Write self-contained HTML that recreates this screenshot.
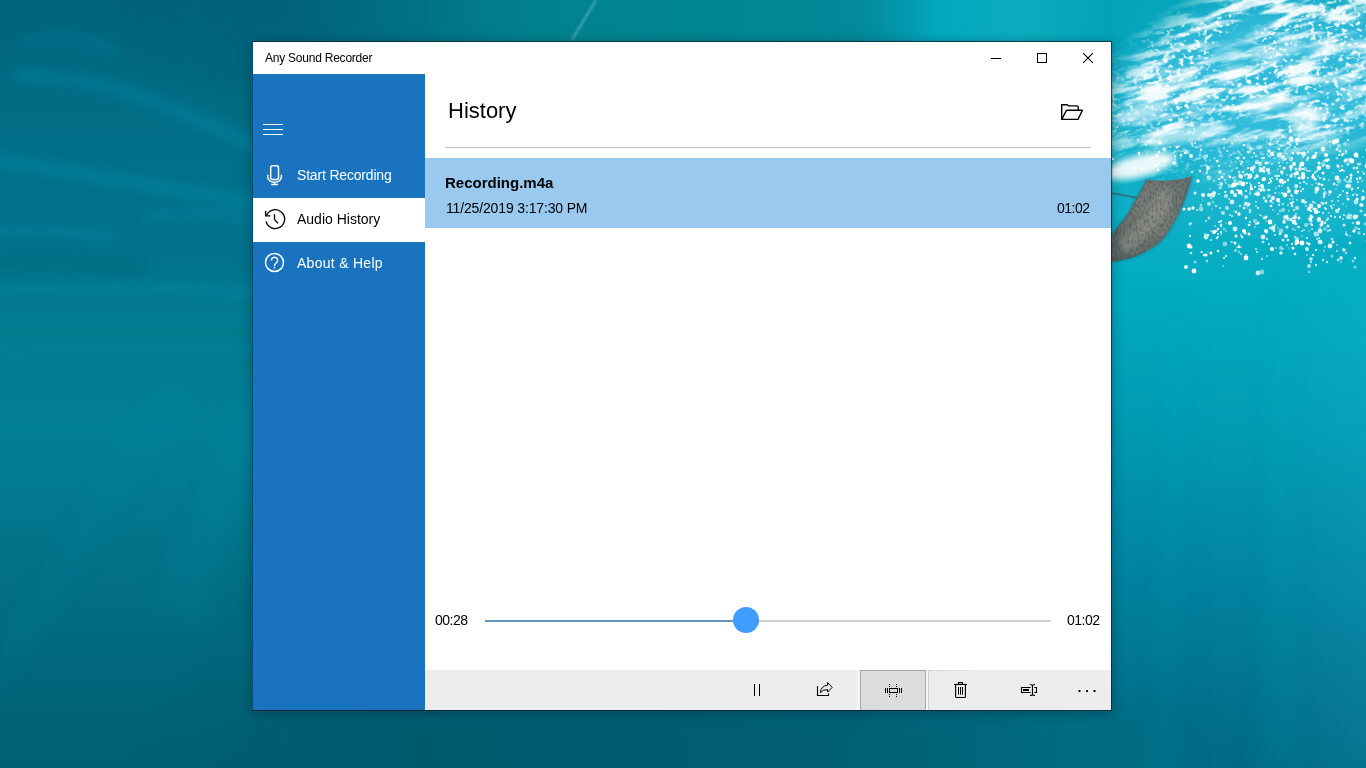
<!DOCTYPE html>
<html>
<head>
<meta charset="utf-8">
<title>Any Sound Recorder</title>
<style>
html,body{margin:0;padding:0;}
body{width:1366px;height:768px;overflow:hidden;position:relative;font-family:"Liberation Sans",sans-serif;background:#0a7088;}
.abs{position:absolute;}
#bg{position:absolute;left:0;top:0;width:1366px;height:768px;}
#win{position:absolute;left:253px;top:42px;width:858px;height:668px;background:#fff;box-shadow:0 0 0 1px rgba(0,22,28,.6), 0 0 0 2px rgba(70,90,95,.16), 0 2px 12px 1px rgba(0,0,0,.3);}
#title{position:absolute;left:12px;top:0;height:32px;line-height:32px;font-size:12px;letter-spacing:-.23px;color:#000;white-space:nowrap;}
#side{position:absolute;left:0;top:32px;width:172px;height:636px;background:#1973be;}
.nav{position:absolute;left:0;width:172px;height:44px;}
.nav span{position:absolute;left:44px;top:-1px;line-height:44px;font-size:14px;color:#fff;white-space:nowrap;}
.nav.sel{background:#fff;}
.nav.sel span{color:#000;}
#h1{position:absolute;left:195px;top:53px;font-size:22px;line-height:32px;color:#000;white-space:nowrap;}
#hr{position:absolute;left:192px;top:105px;width:646px;height:1px;background:#c2c2c2;}
#row{position:absolute;left:172px;top:116px;width:686px;height:70px;background:#99c9ef;}
#row .n{position:absolute;left:20px;top:15px;font-size:15px;font-weight:bold;line-height:20px;color:#000;white-space:nowrap;}
#row .d{position:absolute;left:21px;top:40px;letter-spacing:-.15px;font-size:14px;line-height:20px;color:#000;white-space:nowrap;}
#row .t{position:absolute;left:632px;top:40px;letter-spacing:-.5px;font-size:14px;line-height:20px;color:#000;white-space:nowrap;}
.tm{position:absolute;letter-spacing:-.5px;font-size:14px;line-height:20px;color:#000;white-space:nowrap;top:568px;}
#trk1{position:absolute;left:232px;top:578px;width:260px;height:2px;background:#6694ba;}
#trk2{position:absolute;left:492px;top:578px;width:306px;height:2px;background:#cfcfcf;}
#thumb{position:absolute;left:480px;top:565px;width:26px;height:26px;border-radius:13px;background:#409cff;}
#cmd{position:absolute;left:172px;top:628px;width:686px;height:40px;background:#ededed;}
#selbtn{position:absolute;left:607px;top:628px;width:66px;height:40px;background:#dcdcdc;box-sizing:border-box;border:1px solid #a6a6a6;border-bottom-color:#d4d4d4;}
svg{position:absolute;overflow:visible;}
</style>
</head>
<body>
<svg id="bg" width="1366" height="768" viewBox="0 0 1366 768">
<defs>
<linearGradient id="gL" x1="0" y1="0" x2="0" y2="768" gradientUnits="userSpaceOnUse"><stop offset="0.0000" stop-color="#00637b"/><stop offset="0.0260" stop-color="#00657d"/><stop offset="0.1562" stop-color="#016e86"/><stop offset="0.2930" stop-color="#01728a"/><stop offset="0.4232" stop-color="#027a8e"/><stop offset="0.5599" stop-color="#028096"/><stop offset="0.7487" stop-color="#027086"/><stop offset="0.9570" stop-color="#016276"/><stop offset="1.0000" stop-color="#015f72"/></linearGradient>
<linearGradient id="gR" x1="0" y1="0" x2="0" y2="768" gradientUnits="userSpaceOnUse"><stop offset="0.0000" stop-color="#06a6bc"/><stop offset="0.0781" stop-color="#0cacc4"/><stop offset="0.1953" stop-color="#12b2ca"/><stop offset="0.2865" stop-color="#0cb0c6"/><stop offset="0.3776" stop-color="#02acc0"/><stop offset="0.5404" stop-color="#029db6"/><stop offset="0.7227" stop-color="#0287a4"/><stop offset="0.9310" stop-color="#02708c"/><stop offset="1.0000" stop-color="#016a84"/></linearGradient>
<linearGradient id="gT" x1="0" y1="0" x2="1366" y2="0" gradientUnits="userSpaceOnUse"><stop offset="0.1464" stop-color="#016078" stop-opacity="0"/><stop offset="0.2196" stop-color="#01647c" stop-opacity="1"/><stop offset="0.3075" stop-color="#017286" stop-opacity="1"/><stop offset="0.3953" stop-color="#028290" stop-opacity="1"/><stop offset="0.5124" stop-color="#028592" stop-opacity="1"/><stop offset="0.6296" stop-color="#028a9a" stop-opacity="1"/><stop offset="0.6589" stop-color="#0298ac" stop-opacity="1"/><stop offset="0.6881" stop-color="#03a8c0" stop-opacity="1"/><stop offset="0.7467" stop-color="#0cacc0" stop-opacity="1"/><stop offset="0.8133" stop-color="#04a2b8" stop-opacity="1"/><stop offset="0.8712" stop-color="#06a6bc" stop-opacity="0"/></linearGradient>
<linearGradient id="gB" x1="0" y1="0" x2="1366" y2="0" gradientUnits="userSpaceOnUse"><stop offset="0.1098" stop-color="#016074" stop-opacity="0"/><stop offset="0.2196" stop-color="#015c70" stop-opacity="1"/><stop offset="0.3075" stop-color="#015a6c" stop-opacity="1"/><stop offset="0.6003" stop-color="#015e72" stop-opacity="1"/><stop offset="0.7760" stop-color="#016b80" stop-opacity="1"/><stop offset="0.8419" stop-color="#026e86" stop-opacity="1"/><stop offset="0.9151" stop-color="#026e88" stop-opacity="0"/></linearGradient>
<linearGradient id="gM" x1="0" y1="0" x2="1366" y2="0" gradientUnits="userSpaceOnUse">
<stop offset="0" stop-color="#000"/><stop offset=".45" stop-color="#000"/><stop offset=".78" stop-color="#fff"/><stop offset="1" stop-color="#fff"/>
</linearGradient>
<linearGradient id="gMB" x1="0" y1="660" x2="0" y2="768" gradientUnits="userSpaceOnUse"><stop offset="0" stop-color="#000"/><stop offset=".25" stop-color="#000"/><stop offset=".7" stop-color="#fff"/><stop offset="1" stop-color="#fff"/></linearGradient>
<mask id="mB"><rect x="0" y="660" width="1366" height="108" fill="url(#gMB)"/></mask>
<linearGradient id="gMT" x1="0" y1="0" x2="0" y2="100" gradientUnits="userSpaceOnUse"><stop offset="0" stop-color="#fff"/><stop offset=".45" stop-color="#fff"/><stop offset=".9" stop-color="#000"/><stop offset="1" stop-color="#000"/></linearGradient>
<mask id="mT"><rect x="0" y="0" width="1366" height="100" fill="url(#gMT)"/></mask>
<linearGradient id="gRH" x1="1111" y1="0" x2="1366" y2="0" gradientUnits="userSpaceOnUse"><stop offset="0" stop-color="#002840" stop-opacity=".01"/><stop offset=".5" stop-color="#002840" stop-opacity="0"/><stop offset=".55" stop-color="#40d8ff" stop-opacity="0"/><stop offset="1" stop-color="#40d8ff" stop-opacity=".1"/></linearGradient>
<linearGradient id="gMRH" x1="0" y1="240" x2="0" y2="340" gradientUnits="userSpaceOnUse"><stop offset="0" stop-color="#000"/><stop offset="1" stop-color="#fff"/></linearGradient>
<mask id="mRH"><rect x="1100" y="240" width="270" height="530" fill="url(#gMRH)"/></mask>
<mask id="mR"><rect width="1366" height="768" fill="url(#gM)"/></mask>
<radialGradient id="gFoamMask" cx="0" cy="0" r="1" gradientUnits="userSpaceOnUse" gradientTransform="translate(1300 62) rotate(-18) scale(235 105)">
<stop offset="0" stop-color="#fff"/><stop offset=".72" stop-color="#fff"/><stop offset="1" stop-color="#000"/>
</radialGradient>
<mask id="mFoam"><rect width="1366" height="768" fill="url(#gFoamMask)"/></mask>
<radialGradient id="gBubMask" cx="0" cy="0" r="1" gradientUnits="userSpaceOnUse" gradientTransform="translate(1290 175) scale(200 95)">
<stop offset="0" stop-color="#fff"/><stop offset=".6" stop-color="#ccc"/><stop offset="1" stop-color="#000"/>
</radialGradient>
<mask id="mBub"><rect width="1366" height="768" fill="url(#gBubMask)"/></mask>
<filter id="fFoam" x="0" y="0" width="100%" height="100%" color-interpolation-filters="sRGB">
<feTurbulence type="fractalNoise" baseFrequency="0.026 0.11" numOctaves="6" seed="7" result="t"/>
<feColorMatrix in="t" type="matrix" values="0 0 0 0 1  0 0 0 0 1  0 0 0 0 1  4.8 0 0 0 -2.08" result="a"/>
<feTurbulence type="fractalNoise" baseFrequency="0.011 0.022" numOctaves="2" seed="9" result="t2"/>
<feColorMatrix in="t2" type="matrix" values="0 0 0 0 1  0 0 0 0 1  0 0 0 0 1  5 0 0 0 -1.45" result="b"/>
<feComposite in="a" in2="b" operator="in"/>
<feGaussianBlur stdDeviation="0.7"/>
</filter>
<filter id="fFoam2" x="0" y="0" width="100%" height="100%" color-interpolation-filters="sRGB">
<feTurbulence type="fractalNoise" baseFrequency="0.2 0.26" numOctaves="2" seed="23" result="t"/>
<feColorMatrix in="t" type="matrix" values="0 0 0 0 1  0 0 0 0 1  0 0 0 0 1  12 0 0 0 -6.9" result="a"/>
<feTurbulence type="fractalNoise" baseFrequency="0.014 0.025" numOctaves="2" seed="31" result="t2"/>
<feColorMatrix in="t2" type="matrix" values="0 0 0 0 1  0 0 0 0 1  0 0 0 0 1  5 0 0 0 -1.8" result="b"/>
<feComposite in="a" in2="b" operator="in"/>
<feGaussianBlur stdDeviation="0.5"/>
</filter>
<filter id="fBub" x="0" y="0" width="100%" height="100%" color-interpolation-filters="sRGB">
<feTurbulence type="fractalNoise" baseFrequency="0.24" numOctaves="1" seed="11" result="t"/>
<feColorMatrix in="t" type="matrix" values="0 0 0 0 1  0 0 0 0 1  0 0 0 0 1  18 0 0 0 -10.6" result="a"/>
<feTurbulence type="fractalNoise" baseFrequency="0.02 0.035" numOctaves="2" seed="4" result="t2"/>
<feColorMatrix in="t2" type="matrix" values="0 0 0 0 1  0 0 0 0 1  0 0 0 0 1  5 0 0 0 -1.55" result="b"/>
<feComposite in="a" in2="b" operator="in"/>
<feGaussianBlur stdDeviation="0.6"/>
</filter>
<clipPath id="finc"><path d="M1192 176 Q1170 183 1147 179.5 L1128 214 L1108 240 L1108 262 Q1140 260 1162 240 Q1182 215 1192 176Z"/></clipPath>
<filter id="fGrain" x="0" y="0" width="100%" height="100%" color-interpolation-filters="sRGB"><feTurbulence type="fractalNoise" baseFrequency="0.5 0.25" numOctaves="2" seed="3"/><feColorMatrix type="matrix" values="0 0 0 0 .2  0 0 0 0 .22  0 0 0 0 .22  3 0 0 0 -1.2"/></filter>
<filter id="b05"><feGaussianBlur stdDeviation="0.45"/></filter>
<filter id="b1"><feGaussianBlur stdDeviation="1.2"/></filter>
<filter id="b3"><feGaussianBlur stdDeviation="3"/></filter>
<filter id="b5"><feGaussianBlur stdDeviation="5"/></filter>
<filter id="b8"><feGaussianBlur stdDeviation="8"/></filter>
<filter id="b20"><feGaussianBlur stdDeviation="20"/></filter>
<linearGradient id="gFin" x1="1120" y1="250" x2="1185" y2="180" gradientUnits="userSpaceOnUse">
<stop offset="0" stop-color="#5f6a6a"/><stop offset=".5" stop-color="#7a7f7a"/><stop offset="1" stop-color="#6b7674"/>
</linearGradient>
</defs>
<rect width="1366" height="768" fill="url(#gL)"/>
<rect width="1366" height="768" fill="url(#gR)" mask="url(#mR)"/>
<rect x="0" y="0" width="1366" height="100" fill="url(#gT)" mask="url(#mT)"/>
<rect x="0" y="660" width="1366" height="108" fill="url(#gB)" mask="url(#mB)"/>
<!-- ripples left -->
<g fill="none" stroke="#0a9cc0" stroke-linecap="round" filter="url(#b5)">
<path d="M20 76 Q90 76 150 100 T262 150" stroke-width="14" opacity="0.24"/>
<path d="M-5 160 Q100 176 260 204" stroke-width="16" opacity="0.24"/>
<path d="M-5 232 Q50 228 110 238" stroke-width="10" opacity="0.21"/>
<path d="M-5 290 Q120 284 260 294" stroke-width="12" opacity="0.22"/>
<path d="M-5 318 Q120 312 260 320" stroke-width="8" opacity="0.17"/>
<path d="M-5 352 Q120 348 260 350" stroke-width="10" opacity="0.15"/>
<path d="M150 216 Q210 208 262 224" stroke-width="10" opacity="0.22"/>
<path d="M30 42 Q70 32 110 50" stroke-width="18" opacity="0.11"/>
</g>
<g fill="none" stroke="#00566c" stroke-linecap="round" filter="url(#b8)">
<path d="M0 262 Q70 258 140 268" stroke-width="16" opacity="0.21"/>
<path d="M150 30 Q210 50 255 90" stroke-width="40" opacity="0.15"/>
</g>
<!-- light rays lower-left -->
<g filter="url(#b8)" opacity=".5">
<path d="M250 380 L150 600 L200 620 L262 450Z" fill="#0a8fa4" opacity=".3"/>
<path d="M262 560 L140 768 L262 768Z" fill="#00566a" opacity=".28"/>
<path d="M160 380 L0 640 L0 700 L200 390Z" fill="#0a8fa4" opacity=".18"/>
</g>
<!-- streak top -->
<path d="M596 0 L572 40" stroke="#7fd0dc" stroke-width="2.2" opacity=".5" filter="url(#b1)"/>
<rect x="1111" y="240" width="255" height="528" fill="url(#gRH)" mask="url(#mRH)"/>
<!-- vertical rays right -->
<g filter="url(#b8)">
<path d="M1270 300 L1255 768 L1300 768 L1290 300Z" fill="#18b4cc" opacity=".07"/>
<path d="M1170 300 L1150 768 L1175 768 L1185 300Z" fill="#18b4cc" opacity=".06"/>
</g>
<!-- foam -->
<g mask="url(#mFoam)">
<ellipse cx="1290" cy="85" rx="190" ry="85" fill="#3cc0e2" opacity=".75" filter="url(#b20)"/>
<g transform="rotate(-14 1366 0)"><rect x="900" y="-300" width="700" height="700" fill="#f4fcfe" filter="url(#fFoam)" opacity=".92"/><rect x="900" y="-300" width="700" height="700" fill="#fff" filter="url(#fFoam2)" opacity=".9"/></g>
</g>
<g fill="#fff" filter="url(#b3)" opacity=".6">
<ellipse cx="1181" cy="78" rx="15" ry="8" transform="rotate(-20 1181 78)"/>
<ellipse cx="1142" cy="112" rx="30" ry="8" transform="rotate(-18 1142 112)"/>
<ellipse cx="1185" cy="134" rx="45" ry="7" transform="rotate(-8 1185 134)"/>
<ellipse cx="1278" cy="52" rx="28" ry="5" transform="rotate(-14 1278 52)"/>
<ellipse cx="1335" cy="48" rx="28" ry="4" transform="rotate(-8 1335 48)"/>
<ellipse cx="1268" cy="102" rx="26" ry="7" transform="rotate(-6 1268 102)"/>
<ellipse cx="1305" cy="120" rx="14" ry="18"/>
<ellipse cx="1230" cy="75" rx="18" ry="6" transform="rotate(-25 1230 75)"/>
</g>
<!-- bubbles -->
<ellipse cx="1290" cy="185" rx="120" ry="45" fill="#3cc4e0" opacity=".35" filter="url(#b20)"/>
<g fill="#fff" filter="url(#b05)"><circle cx="1224" cy="148" r="1.2" opacity="0.5"/><circle cx="1326" cy="155" r="2.0" opacity="1"/><circle cx="1357" cy="217" r="1.0" opacity="0.5"/><circle cx="1256" cy="156" r="1.5" opacity="0.5"/><circle cx="1260" cy="215" r="0.8" opacity="1"/><circle cx="1260" cy="164" r="2.4" opacity="0.5"/><circle cx="1258" cy="223" r="1.5" opacity="0.9"/><circle cx="1313" cy="202" r="1.1" opacity="0.8"/><circle cx="1316" cy="250" r="1.1" opacity="1"/><circle cx="1241" cy="247" r="0.8" opacity="0.8"/><circle cx="1235" cy="229" r="2.4" opacity="0.8"/><circle cx="1337" cy="149" r="1.5" opacity="0.8"/><circle cx="1158" cy="170" r="1.3" opacity="1"/><circle cx="1250" cy="222" r="0.9" opacity="1"/><circle cx="1303" cy="201" r="2.0" opacity="1"/><circle cx="1214" cy="193" r="2.0" opacity="0.9"/><circle cx="1113" cy="159" r="1.1" opacity="1"/><circle cx="1368" cy="202" r="0.8" opacity="0.65"/><circle cx="1326" cy="160" r="1.5" opacity="0.8"/><circle cx="1292" cy="174" r="0.9" opacity="0.8"/><circle cx="1311" cy="211" r="1.1" opacity="1"/><circle cx="1303" cy="169" r="1.1" opacity="1"/><circle cx="1358" cy="188" r="1.0" opacity="0.9"/><circle cx="1281" cy="248" r="2.0" opacity="0.5"/><circle cx="1236" cy="162" r="1.1" opacity="0.5"/><circle cx="1157" cy="155" r="1.3" opacity="1"/><circle cx="1282" cy="186" r="0.9" opacity="0.5"/><circle cx="1337" cy="251" r="1.0" opacity="0.65"/><circle cx="1347" cy="186" r="1.7" opacity="1"/><circle cx="1250" cy="210" r="1.3" opacity="0.65"/><circle cx="1269" cy="244" r="0.9" opacity="0.9"/><circle cx="1272" cy="154" r="2.0" opacity="1"/><circle cx="1249" cy="204" r="1.5" opacity="0.5"/><circle cx="1348" cy="199" r="1.5" opacity="1"/><circle cx="1245" cy="233" r="1.5" opacity="0.9"/><circle cx="1243" cy="172" r="1.0" opacity="1"/><circle cx="1342" cy="166" r="1.2" opacity="0.5"/><circle cx="1214" cy="181" r="1.2" opacity="0.5"/><circle cx="1207" cy="173" r="1.3" opacity="0.65"/><circle cx="1221" cy="187" r="1.1" opacity="0.5"/><circle cx="1212" cy="209" r="0.8" opacity="0.5"/><circle cx="1313" cy="175" r="1.2" opacity="1"/><circle cx="1323" cy="173" r="1.5" opacity="1"/><circle cx="1240" cy="183" r="2.4" opacity="0.65"/><circle cx="1276" cy="248" r="1.0" opacity="0.5"/><circle cx="1181" cy="155" r="1.5" opacity="0.9"/><circle cx="1351" cy="175" r="1.5" opacity="1"/><circle cx="1174" cy="153" r="0.7" opacity="0.65"/><circle cx="1308" cy="178" r="0.9" opacity="0.8"/><circle cx="1276" cy="193" r="0.7" opacity="0.65"/><circle cx="1267" cy="233" r="0.9" opacity="0.65"/><circle cx="1190" cy="224" r="1.5" opacity="0.65"/><circle cx="1291" cy="170" r="0.9" opacity="1"/><circle cx="1288" cy="205" r="0.8" opacity="1"/><circle cx="1353" cy="261" r="1.5" opacity="0.5"/><circle cx="1305" cy="203" r="1.0" opacity="0.65"/><circle cx="1300" cy="166" r="1.3" opacity="0.9"/><circle cx="1280" cy="233" r="0.9" opacity="0.5"/><circle cx="1295" cy="177" r="0.8" opacity="1"/><circle cx="1362" cy="200" r="1.0" opacity="0.65"/><circle cx="1275" cy="176" r="1.1" opacity="0.65"/><circle cx="1217" cy="238" r="1.2" opacity="0.8"/><circle cx="1307" cy="255" r="0.7" opacity="1"/><circle cx="1322" cy="224" r="1.5" opacity="1"/><circle cx="1219" cy="222" r="1.0" opacity="0.9"/><circle cx="1234" cy="185" r="2.4" opacity="1"/><circle cx="1364" cy="174" r="1.0" opacity="0.9"/><circle cx="1256" cy="192" r="0.9" opacity="0.5"/><circle cx="1229" cy="157" r="0.8" opacity="0.65"/><circle cx="1201" cy="150" r="1.0" opacity="1"/><circle cx="1211" cy="240" r="1.0" opacity="0.8"/><circle cx="1306" cy="206" r="1.1" opacity="0.65"/><circle cx="1289" cy="211" r="1.0" opacity="0.5"/><circle cx="1337" cy="141" r="2.4" opacity="0.9"/><circle cx="1362" cy="205" r="1.5" opacity="0.9"/><circle cx="1363" cy="172" r="0.9" opacity="0.65"/><circle cx="1298" cy="227" r="1.3" opacity="0.5"/><circle cx="1191" cy="156" r="2.0" opacity="0.9"/><circle cx="1293" cy="153" r="1.5" opacity="1"/><circle cx="1279" cy="149" r="1.2" opacity="0.8"/><circle cx="1221" cy="232" r="1.0" opacity="1"/><circle cx="1343" cy="204" r="0.7" opacity="1"/><circle cx="1363" cy="157" r="0.7" opacity="0.65"/><circle cx="1210" cy="189" r="0.9" opacity="0.5"/><circle cx="1324" cy="197" r="1.3" opacity="0.65"/><circle cx="1207" cy="261" r="1.2" opacity="0.65"/><circle cx="1322" cy="243" r="0.7" opacity="0.9"/><circle cx="1269" cy="183" r="1.1" opacity="1"/><circle cx="1177" cy="147" r="1.5" opacity="1"/><circle cx="1367" cy="174" r="0.8" opacity="0.9"/><circle cx="1241" cy="235" r="1.0" opacity="0.65"/><circle cx="1259" cy="189" r="1.0" opacity="0.9"/><circle cx="1340" cy="217" r="1.2" opacity="0.8"/><circle cx="1368" cy="208" r="0.8" opacity="1"/><circle cx="1232" cy="143" r="1.0" opacity="0.9"/><circle cx="1348" cy="144" r="0.8" opacity="0.5"/><circle cx="1352" cy="189" r="1.3" opacity="1"/><circle cx="1280" cy="166" r="1.1" opacity="0.9"/><circle cx="1287" cy="163" r="1.0" opacity="0.5"/><circle cx="1317" cy="213" r="0.8" opacity="0.9"/><circle cx="1284" cy="159" r="2.0" opacity="0.65"/><circle cx="1285" cy="195" r="2.4" opacity="1"/><circle cx="1340" cy="195" r="1.1" opacity="1"/><circle cx="1324" cy="194" r="1.3" opacity="0.65"/><circle cx="1146" cy="145" r="1.2" opacity="0.5"/><circle cx="1191" cy="253" r="1.3" opacity="0.8"/><circle cx="1246" cy="191" r="1.0" opacity="1"/><circle cx="1323" cy="164" r="2.0" opacity="0.5"/><circle cx="1285" cy="182" r="1.3" opacity="1"/><circle cx="1192" cy="172" r="1.1" opacity="0.9"/><circle cx="1242" cy="162" r="1.3" opacity="0.9"/><circle cx="1231" cy="163" r="0.8" opacity="0.5"/><circle cx="1227" cy="208" r="2.0" opacity="0.65"/><circle cx="1244" cy="145" r="1.2" opacity="1"/><circle cx="1316" cy="265" r="1.1" opacity="1"/><circle cx="1307" cy="160" r="1.0" opacity="0.9"/><circle cx="1195" cy="143" r="0.9" opacity="1"/><circle cx="1249" cy="225" r="1.3" opacity="1"/><circle cx="1303" cy="189" r="1.1" opacity="1"/><circle cx="1189" cy="209" r="1.7" opacity="1"/><circle cx="1220" cy="188" r="1.3" opacity="0.65"/><circle cx="1270" cy="144" r="1.7" opacity="0.8"/><circle cx="1219" cy="179" r="1.1" opacity="1"/><circle cx="1326" cy="160" r="1.0" opacity="1"/><circle cx="1337" cy="245" r="1.0" opacity="0.5"/><circle cx="1266" cy="217" r="1.5" opacity="1"/><circle cx="1240" cy="161" r="0.7" opacity="1"/><circle cx="1119" cy="163" r="0.8" opacity="0.5"/><circle cx="1270" cy="228" r="1.2" opacity="0.65"/><circle cx="1220" cy="222" r="0.8" opacity="0.8"/><circle cx="1236" cy="212" r="1.2" opacity="1"/><circle cx="1279" cy="155" r="2.4" opacity="0.8"/><circle cx="1296" cy="174" r="1.2" opacity="1"/><circle cx="1316" cy="210" r="2.0" opacity="0.65"/><circle cx="1346" cy="253" r="0.9" opacity="1"/><circle cx="1348" cy="164" r="1.7" opacity="0.65"/><circle cx="1234" cy="211" r="0.7" opacity="0.9"/><circle cx="1316" cy="192" r="1.7" opacity="0.65"/><circle cx="1150" cy="142" r="0.9" opacity="0.8"/><circle cx="1364" cy="234" r="0.9" opacity="1"/><circle cx="1278" cy="144" r="0.7" opacity="0.5"/><circle cx="1333" cy="242" r="1.5" opacity="1"/><circle cx="1356" cy="153" r="0.8" opacity="0.5"/><circle cx="1187" cy="152" r="2.0" opacity="0.65"/><circle cx="1189" cy="184" r="1.1" opacity="0.8"/><circle cx="1235" cy="177" r="1.2" opacity="0.5"/><circle cx="1225" cy="244" r="2.4" opacity="0.5"/><circle cx="1251" cy="168" r="0.8" opacity="1"/><circle cx="1324" cy="161" r="1.0" opacity="0.8"/><circle cx="1309" cy="272" r="1.3" opacity="0.5"/><circle cx="1239" cy="247" r="1.3" opacity="1"/><circle cx="1202" cy="252" r="0.9" opacity="0.8"/><circle cx="1221" cy="226" r="1.0" opacity="0.8"/><circle cx="1223" cy="213" r="2.0" opacity="0.65"/><circle cx="1356" cy="155" r="2.4" opacity="1"/><circle cx="1279" cy="186" r="0.9" opacity="0.9"/><circle cx="1283" cy="240" r="1.3" opacity="1"/><circle cx="1312" cy="217" r="1.3" opacity="1"/><circle cx="1340" cy="171" r="1.0" opacity="1"/><circle cx="1325" cy="223" r="1.0" opacity="1"/><circle cx="1197" cy="210" r="1.1" opacity="0.65"/><circle cx="1152" cy="158" r="1.0" opacity="0.9"/><circle cx="1293" cy="218" r="1.0" opacity="1"/><circle cx="1278" cy="200" r="2.0" opacity="1"/><circle cx="1296" cy="224" r="1.2" opacity="0.9"/><circle cx="1230" cy="223" r="2.0" opacity="1"/><circle cx="1352" cy="163" r="0.7" opacity="0.9"/><circle cx="1327" cy="262" r="1.0" opacity="1"/><circle cx="1230" cy="166" r="0.7" opacity="1"/><circle cx="1317" cy="189" r="2.4" opacity="0.9"/><circle cx="1221" cy="234" r="1.0" opacity="0.5"/><circle cx="1248" cy="168" r="1.2" opacity="0.9"/><circle cx="1321" cy="225" r="1.5" opacity="1"/><circle cx="1233" cy="178" r="0.9" opacity="0.9"/><circle cx="1204" cy="255" r="1.2" opacity="1"/><circle cx="1314" cy="157" r="2.0" opacity="1"/><circle cx="1282" cy="172" r="0.9" opacity="0.65"/><circle cx="1277" cy="179" r="1.0" opacity="1"/><circle cx="1326" cy="203" r="1.3" opacity="0.9"/><circle cx="1346" cy="234" r="0.9" opacity="1"/><circle cx="1267" cy="239" r="1.1" opacity="0.9"/><circle cx="1292" cy="206" r="1.3" opacity="0.8"/><circle cx="1370" cy="249" r="1.3" opacity="0.9"/><circle cx="1308" cy="158" r="1.2" opacity="1"/><circle cx="1347" cy="177" r="1.0" opacity="1"/><circle cx="1337" cy="185" r="1.3" opacity="0.5"/><circle cx="1198" cy="181" r="1.7" opacity="1"/><circle cx="1255" cy="194" r="1.2" opacity="0.8"/><circle cx="1235" cy="243" r="1.5" opacity="1"/><circle cx="1270" cy="222" r="2.4" opacity="1"/><circle cx="1266" cy="231" r="2.0" opacity="1"/><circle cx="1231" cy="242" r="0.9" opacity="0.5"/><circle cx="1160" cy="143" r="1.7" opacity="1"/><circle cx="1221" cy="233" r="0.8" opacity="0.5"/><circle cx="1288" cy="219" r="2.0" opacity="0.65"/><circle cx="1235" cy="195" r="2.0" opacity="0.9"/><circle cx="1168" cy="159" r="0.7" opacity="0.5"/><circle cx="1302" cy="164" r="2.4" opacity="1"/><circle cx="1292" cy="158" r="1.0" opacity="1"/><circle cx="1256" cy="206" r="1.0" opacity="0.5"/><circle cx="1297" cy="140" r="2.0" opacity="1"/><circle cx="1323" cy="149" r="2.4" opacity="1"/><circle cx="1226" cy="231" r="0.8" opacity="0.8"/><circle cx="1319" cy="220" r="2.4" opacity="0.5"/><circle cx="1327" cy="220" r="1.2" opacity="0.65"/><circle cx="1343" cy="249" r="0.7" opacity="0.8"/><circle cx="1323" cy="260" r="0.9" opacity="1"/><circle cx="1250" cy="212" r="1.2" opacity="0.65"/><circle cx="1251" cy="187" r="1.2" opacity="1"/><circle cx="1247" cy="174" r="1.1" opacity="0.9"/><circle cx="1243" cy="166" r="0.8" opacity="0.65"/><circle cx="1320" cy="178" r="1.1" opacity="0.9"/><circle cx="1313" cy="255" r="1.3" opacity="0.8"/><circle cx="1336" cy="189" r="0.8" opacity="0.65"/><circle cx="1269" cy="151" r="1.7" opacity="0.9"/><circle cx="1264" cy="167" r="1.0" opacity="0.9"/><circle cx="1269" cy="156" r="1.1" opacity="0.65"/><circle cx="1369" cy="190" r="0.7" opacity="1"/><circle cx="1208" cy="235" r="0.8" opacity="1"/><circle cx="1355" cy="267" r="1.5" opacity="0.5"/><circle cx="1354" cy="231" r="1.7" opacity="0.9"/><circle cx="1308" cy="152" r="1.0" opacity="0.9"/><circle cx="1229" cy="185" r="1.3" opacity="0.5"/><circle cx="1274" cy="158" r="0.7" opacity="0.65"/><circle cx="1296" cy="214" r="0.9" opacity="0.8"/><circle cx="1220" cy="172" r="1.7" opacity="0.8"/><circle cx="1195" cy="262" r="1.5" opacity="0.5"/><circle cx="1257" cy="252" r="1.0" opacity="0.8"/><circle cx="1224" cy="174" r="1.0" opacity="0.5"/><circle cx="1213" cy="195" r="2.4" opacity="0.8"/><circle cx="1244" cy="208" r="1.5" opacity="0.8"/><circle cx="1164" cy="149" r="1.7" opacity="1"/><circle cx="1240" cy="176" r="1.7" opacity="1"/><circle cx="1218" cy="237" r="1.1" opacity="0.8"/><circle cx="1258" cy="273" r="2.4" opacity="0.8"/><circle cx="1303" cy="174" r="2.0" opacity="1"/><circle cx="1232" cy="171" r="1.1" opacity="0.5"/><circle cx="1297" cy="144" r="1.3" opacity="1"/><circle cx="1242" cy="176" r="1.2" opacity="0.65"/><circle cx="1252" cy="169" r="2.0" opacity="1"/><circle cx="1266" cy="221" r="0.7" opacity="0.8"/><circle cx="1200" cy="171" r="1.2" opacity="1"/><circle cx="1221" cy="225" r="1.5" opacity="0.65"/><circle cx="1287" cy="175" r="0.7" opacity="1"/><circle cx="1139" cy="155" r="1.0" opacity="0.5"/><circle cx="1245" cy="175" r="1.5" opacity="0.65"/><circle cx="1348" cy="217" r="2.4" opacity="0.5"/><circle cx="1303" cy="177" r="2.4" opacity="1"/><circle cx="1236" cy="250" r="1.1" opacity="0.65"/><circle cx="1358" cy="182" r="1.0" opacity="0.8"/><circle cx="1339" cy="168" r="0.7" opacity="0.65"/><circle cx="1255" cy="221" r="2.0" opacity="0.5"/><circle cx="1309" cy="209" r="2.0" opacity="1"/><circle cx="1353" cy="195" r="0.9" opacity="1"/><circle cx="1275" cy="225" r="1.2" opacity="0.5"/><circle cx="1269" cy="190" r="1.3" opacity="0.8"/><circle cx="1299" cy="178" r="1.5" opacity="1"/><circle cx="1331" cy="206" r="0.9" opacity="1"/><circle cx="1359" cy="166" r="0.7" opacity="0.5"/><circle cx="1289" cy="191" r="1.7" opacity="1"/><circle cx="1248" cy="152" r="1.2" opacity="1"/><circle cx="1361" cy="205" r="1.7" opacity="1"/><circle cx="1325" cy="208" r="1.0" opacity="1"/><circle cx="1323" cy="166" r="1.2" opacity="0.65"/><circle cx="1291" cy="139" r="2.4" opacity="1"/><circle cx="1138" cy="140" r="0.9" opacity="0.9"/><circle cx="1311" cy="216" r="1.5" opacity="1"/><circle cx="1369" cy="217" r="0.8" opacity="0.65"/><circle cx="1325" cy="222" r="0.7" opacity="1"/><circle cx="1297" cy="186" r="1.0" opacity="1"/><circle cx="1203" cy="200" r="0.7" opacity="0.65"/><circle cx="1226" cy="223" r="0.7" opacity="0.65"/><circle cx="1344" cy="250" r="1.7" opacity="0.8"/><circle cx="1237" cy="247" r="0.9" opacity="0.65"/><circle cx="1250" cy="191" r="0.8" opacity="0.5"/><circle cx="1213" cy="202" r="1.2" opacity="0.5"/><circle cx="1175" cy="156" r="1.5" opacity="0.65"/><circle cx="1256" cy="202" r="1.0" opacity="0.65"/><circle cx="1208" cy="168" r="2.0" opacity="1"/><circle cx="1295" cy="174" r="1.7" opacity="0.8"/><circle cx="1250" cy="193" r="0.9" opacity="0.5"/><circle cx="1302" cy="243" r="2.4" opacity="1"/><circle cx="1292" cy="244" r="1.0" opacity="1"/><circle cx="1320" cy="242" r="2.4" opacity="0.8"/><circle cx="1346" cy="151" r="1.0" opacity="1"/><circle cx="1302" cy="236" r="0.7" opacity="1"/><circle cx="1155" cy="165" r="1.2" opacity="1"/><circle cx="1297" cy="173" r="2.0" opacity="1"/><circle cx="1313" cy="177" r="1.7" opacity="1"/><circle cx="1357" cy="199" r="1.5" opacity="1"/><circle cx="1244" cy="231" r="2.0" opacity="1"/><circle cx="1257" cy="162" r="2.0" opacity="0.65"/><circle cx="1253" cy="172" r="1.1" opacity="0.8"/><circle cx="1219" cy="166" r="0.9" opacity="1"/><circle cx="1295" cy="230" r="1.0" opacity="0.5"/><circle cx="1323" cy="213" r="0.9" opacity="1"/><circle cx="1284" cy="220" r="1.2" opacity="0.65"/><circle cx="1206" cy="161" r="0.7" opacity="0.9"/><circle cx="1368" cy="241" r="2.4" opacity="0.8"/><circle cx="1365" cy="215" r="1.3" opacity="0.9"/><circle cx="1239" cy="245" r="1.1" opacity="0.5"/><circle cx="1281" cy="172" r="0.9" opacity="1"/><circle cx="1208" cy="252" r="0.7" opacity="0.5"/><circle cx="1240" cy="206" r="1.0" opacity="1"/><circle cx="1222" cy="177" r="1.5" opacity="1"/><circle cx="1221" cy="184" r="2.0" opacity="0.65"/><circle cx="1345" cy="161" r="1.3" opacity="1"/><circle cx="1287" cy="216" r="1.5" opacity="0.8"/><circle cx="1246" cy="197" r="2.0" opacity="0.65"/><circle cx="1270" cy="179" r="1.1" opacity="0.9"/><circle cx="1282" cy="157" r="1.5" opacity="1"/><circle cx="1209" cy="218" r="1.5" opacity="0.65"/><circle cx="1258" cy="192" r="0.9" opacity="0.65"/><circle cx="1254" cy="153" r="1.0" opacity="1"/><circle cx="1239" cy="214" r="1.7" opacity="1"/><circle cx="1297" cy="242" r="2.4" opacity="1"/><circle cx="1312" cy="157" r="0.7" opacity="0.9"/><circle cx="1174" cy="189" r="1.7" opacity="0.65"/><circle cx="1231" cy="155" r="0.8" opacity="1"/><circle cx="1367" cy="166" r="2.4" opacity="0.8"/><circle cx="1309" cy="231" r="0.8" opacity="0.65"/><circle cx="1328" cy="218" r="0.7" opacity="0.9"/><circle cx="1255" cy="178" r="1.2" opacity="0.65"/><circle cx="1264" cy="172" r="1.0" opacity="0.9"/><circle cx="1288" cy="192" r="0.9" opacity="1"/><circle cx="1330" cy="192" r="1.7" opacity="1"/><circle cx="1343" cy="219" r="0.9" opacity="0.8"/><circle cx="1300" cy="183" r="1.1" opacity="0.8"/><circle cx="1312" cy="225" r="1.1" opacity="0.8"/><circle cx="1317" cy="171" r="0.9" opacity="1"/><circle cx="1206" cy="255" r="1.5" opacity="1"/><circle cx="1207" cy="171" r="1.1" opacity="0.65"/><circle cx="1229" cy="199" r="1.0" opacity="0.65"/><circle cx="1264" cy="158" r="1.0" opacity="1"/><circle cx="1263" cy="180" r="1.3" opacity="0.8"/><circle cx="1308" cy="224" r="0.7" opacity="0.65"/><circle cx="1175" cy="146" r="0.7" opacity="0.5"/><circle cx="1298" cy="139" r="2.0" opacity="0.5"/><circle cx="1217" cy="231" r="0.7" opacity="0.9"/><circle cx="1355" cy="258" r="1.1" opacity="1"/><circle cx="1281" cy="181" r="2.4" opacity="1"/><circle cx="1328" cy="159" r="1.0" opacity="0.65"/><circle cx="1261" cy="170" r="2.4" opacity="0.9"/><circle cx="1309" cy="244" r="1.5" opacity="1"/><circle cx="1229" cy="176" r="1.0" opacity="0.65"/><circle cx="1275" cy="193" r="0.7" opacity="1"/><circle cx="1256" cy="163" r="1.1" opacity="1"/><circle cx="1350" cy="160" r="2.4" opacity="0.65"/><circle cx="1226" cy="256" r="1.1" opacity="0.9"/><circle cx="1279" cy="193" r="0.7" opacity="0.65"/><circle cx="1258" cy="194" r="2.0" opacity="1"/><circle cx="1334" cy="142" r="2.4" opacity="0.9"/><circle cx="1358" cy="157" r="0.8" opacity="0.8"/><circle cx="1332" cy="239" r="1.3" opacity="0.65"/><circle cx="1289" cy="248" r="0.7" opacity="0.65"/><circle cx="1347" cy="159" r="0.8" opacity="0.65"/><circle cx="1232" cy="192" r="2.0" opacity="1"/><circle cx="1339" cy="155" r="0.9" opacity="1"/><circle cx="1349" cy="186" r="1.0" opacity="1"/><circle cx="1230" cy="177" r="1.2" opacity="1"/><circle cx="1297" cy="193" r="1.2" opacity="0.9"/><circle cx="1363" cy="191" r="1.2" opacity="0.65"/><circle cx="1344" cy="225" r="1.5" opacity="0.8"/><circle cx="1325" cy="229" r="1.7" opacity="0.5"/><circle cx="1194" cy="271" r="2.4" opacity="1"/><circle cx="1332" cy="208" r="1.2" opacity="0.65"/><circle cx="1350" cy="243" r="1.3" opacity="1"/><circle cx="1207" cy="166" r="1.1" opacity="0.65"/><circle cx="1286" cy="159" r="0.9" opacity="1"/><circle cx="1347" cy="182" r="1.2" opacity="0.5"/><circle cx="1218" cy="234" r="1.1" opacity="0.8"/><circle cx="1283" cy="210" r="2.0" opacity="0.5"/><circle cx="1273" cy="210" r="1.0" opacity="0.5"/><circle cx="1256" cy="138" r="1.7" opacity="0.65"/><circle cx="1248" cy="206" r="0.9" opacity="0.9"/><circle cx="1350" cy="236" r="0.7" opacity="1"/><circle cx="1269" cy="173" r="1.7" opacity="0.65"/><circle cx="1296" cy="189" r="1.1" opacity="0.5"/><circle cx="1316" cy="153" r="1.3" opacity="1"/><circle cx="1329" cy="195" r="0.8" opacity="0.9"/><circle cx="1115" cy="170" r="1.5" opacity="0.5"/><circle cx="1351" cy="178" r="1.2" opacity="0.9"/><circle cx="1143" cy="168" r="0.7" opacity="0.5"/><circle cx="1241" cy="254" r="1.3" opacity="0.5"/><circle cx="1325" cy="165" r="0.7" opacity="1"/><circle cx="1291" cy="195" r="1.2" opacity="0.5"/><circle cx="1337" cy="158" r="1.5" opacity="0.5"/><circle cx="1288" cy="180" r="1.2" opacity="0.9"/><circle cx="1333" cy="173" r="0.7" opacity="0.65"/><circle cx="1251" cy="189" r="1.3" opacity="1"/><circle cx="1263" cy="188" r="1.0" opacity="0.9"/><circle cx="1349" cy="214" r="1.1" opacity="0.5"/><circle cx="1250" cy="194" r="1.1" opacity="0.5"/><circle cx="1339" cy="146" r="2.0" opacity="0.5"/><circle cx="1266" cy="163" r="1.5" opacity="1"/><circle cx="1319" cy="206" r="2.0" opacity="1"/><circle cx="1357" cy="195" r="1.0" opacity="1"/><circle cx="1346" cy="232" r="0.7" opacity="1"/><circle cx="1295" cy="237" r="1.0" opacity="0.8"/><circle cx="1254" cy="167" r="2.0" opacity="0.65"/><circle cx="1278" cy="169" r="0.8" opacity="0.65"/><circle cx="1287" cy="154" r="0.8" opacity="1"/><circle cx="1248" cy="178" r="1.3" opacity="0.5"/><circle cx="1263" cy="242" r="1.3" opacity="0.8"/><circle cx="1262" cy="179" r="0.8" opacity="0.5"/><circle cx="1315" cy="179" r="1.5" opacity="0.9"/><circle cx="1266" cy="201" r="1.5" opacity="1"/><circle cx="1262" cy="186" r="2.0" opacity="1"/><circle cx="1236" cy="158" r="1.0" opacity="0.5"/><circle cx="1175" cy="151" r="0.7" opacity="0.9"/><circle cx="1316" cy="234" r="2.4" opacity="0.65"/><circle cx="1284" cy="168" r="1.5" opacity="1"/><circle cx="1324" cy="251" r="1.1" opacity="0.5"/><circle cx="1322" cy="185" r="1.3" opacity="1"/><circle cx="1219" cy="194" r="1.0" opacity="0.65"/><circle cx="1302" cy="231" r="1.1" opacity="0.65"/><circle cx="1295" cy="147" r="1.3" opacity="0.5"/><circle cx="1306" cy="225" r="2.0" opacity="0.5"/><circle cx="1330" cy="246" r="2.4" opacity="0.8"/><circle cx="1311" cy="206" r="2.4" opacity="0.8"/><circle cx="1319" cy="219" r="2.0" opacity="1"/><circle cx="1315" cy="173" r="1.0" opacity="0.65"/><circle cx="1296" cy="192" r="2.0" opacity="1"/><circle cx="1312" cy="185" r="0.8" opacity="0.65"/><circle cx="1281" cy="253" r="1.7" opacity="0.9"/><circle cx="1221" cy="221" r="1.1" opacity="1"/><circle cx="1272" cy="178" r="1.0" opacity="0.65"/><circle cx="1293" cy="199" r="1.0" opacity="0.5"/><circle cx="1343" cy="191" r="0.9" opacity="0.8"/><circle cx="1284" cy="156" r="1.0" opacity="1"/><circle cx="1220" cy="208" r="1.0" opacity="0.8"/><circle cx="1346" cy="206" r="0.7" opacity="0.5"/><circle cx="1338" cy="260" r="1.2" opacity="0.9"/><circle cx="1193" cy="208" r="1.7" opacity="1"/><circle cx="1365" cy="224" r="1.5" opacity="0.5"/><circle cx="1320" cy="231" r="2.4" opacity="0.8"/><circle cx="1291" cy="176" r="1.7" opacity="0.9"/><circle cx="1325" cy="247" r="0.9" opacity="0.65"/><circle cx="1246" cy="258" r="2.4" opacity="1"/><circle cx="1360" cy="164" r="1.3" opacity="0.65"/><circle cx="1288" cy="188" r="1.3" opacity="0.8"/><circle cx="1242" cy="194" r="1.1" opacity="0.5"/><circle cx="1249" cy="178" r="1.0" opacity="0.9"/><circle cx="1259" cy="186" r="1.0" opacity="0.65"/><circle cx="1341" cy="258" r="1.7" opacity="1"/><circle cx="1352" cy="161" r="2.4" opacity="1"/><circle cx="1304" cy="154" r="2.4" opacity="0.8"/><circle cx="1216" cy="206" r="0.9" opacity="1"/><circle cx="1337" cy="211" r="2.0" opacity="0.8"/><circle cx="1285" cy="217" r="1.7" opacity="1"/><circle cx="1328" cy="159" r="1.0" opacity="1"/><circle cx="1311" cy="221" r="1.7" opacity="0.65"/><circle cx="1345" cy="180" r="1.7" opacity="0.5"/><circle cx="1205" cy="234" r="1.1" opacity="0.65"/><circle cx="1256" cy="249" r="1.3" opacity="0.5"/><circle cx="1361" cy="211" r="1.5" opacity="0.65"/><circle cx="1296" cy="169" r="1.5" opacity="0.8"/><circle cx="1299" cy="218" r="1.5" opacity="1"/><circle cx="1282" cy="172" r="1.7" opacity="0.65"/><circle cx="1272" cy="164" r="0.8" opacity="0.9"/><circle cx="1189" cy="246" r="2.4" opacity="1"/><circle cx="1271" cy="140" r="1.2" opacity="0.5"/><circle cx="1328" cy="226" r="1.5" opacity="0.8"/><circle cx="1256" cy="224" r="1.1" opacity="0.8"/><circle cx="1192" cy="144" r="1.1" opacity="0.9"/><circle cx="1139" cy="153" r="1.3" opacity="0.9"/><circle cx="1235" cy="251" r="0.8" opacity="1"/><circle cx="1258" cy="208" r="1.0" opacity="1"/><circle cx="1301" cy="191" r="1.2" opacity="0.65"/><circle cx="1334" cy="184" r="1.3" opacity="0.9"/><circle cx="1311" cy="262" r="1.0" opacity="0.8"/><circle cx="1286" cy="236" r="2.0" opacity="0.9"/><circle cx="1291" cy="203" r="1.3" opacity="1"/><circle cx="1305" cy="169" r="2.0" opacity="0.5"/><circle cx="1340" cy="151" r="1.5" opacity="0.65"/><circle cx="1271" cy="182" r="1.2" opacity="0.5"/><circle cx="1316" cy="212" r="2.0" opacity="1"/><circle cx="1271" cy="201" r="1.5" opacity="1"/><circle cx="1328" cy="167" r="2.4" opacity="0.65"/><circle cx="1366" cy="150" r="1.0" opacity="0.8"/><circle cx="1311" cy="139" r="0.8" opacity="1"/><circle cx="1291" cy="220" r="1.3" opacity="0.9"/><circle cx="1350" cy="217" r="2.4" opacity="0.5"/><circle cx="1224" cy="258" r="1.0" opacity="0.9"/><circle cx="1330" cy="142" r="0.9" opacity="0.9"/><circle cx="1306" cy="183" r="0.7" opacity="0.9"/><circle cx="1251" cy="185" r="1.1" opacity="0.8"/><circle cx="1201" cy="149" r="0.7" opacity="0.8"/><circle cx="1222" cy="184" r="0.8" opacity="0.9"/><circle cx="1136" cy="167" r="0.7" opacity="1"/><circle cx="1291" cy="167" r="2.0" opacity="1"/><circle cx="1303" cy="157" r="0.8" opacity="1"/><circle cx="1251" cy="148" r="1.5" opacity="0.5"/><circle cx="1299" cy="227" r="1.0" opacity="0.9"/><circle cx="1159" cy="152" r="1.2" opacity="1"/><circle cx="1290" cy="199" r="0.8" opacity="0.9"/><circle cx="1201" cy="252" r="1.0" opacity="0.5"/><circle cx="1346" cy="160" r="1.7" opacity="0.8"/><circle cx="1283" cy="163" r="0.8" opacity="0.5"/><circle cx="1170" cy="147" r="0.9" opacity="0.8"/><circle cx="1206" cy="237" r="2.4" opacity="0.8"/><circle cx="1309" cy="266" r="2.0" opacity="0.65"/><circle cx="1208" cy="177" r="1.3" opacity="0.5"/><circle cx="1347" cy="196" r="1.0" opacity="0.5"/><circle cx="1237" cy="168" r="1.2" opacity="0.5"/><circle cx="1247" cy="208" r="0.8" opacity="0.5"/><circle cx="1315" cy="156" r="2.0" opacity="0.8"/><circle cx="1312" cy="229" r="1.1" opacity="0.65"/><circle cx="1280" cy="234" r="1.3" opacity="1"/><circle cx="1134" cy="168" r="1.3" opacity="0.65"/><circle cx="1329" cy="180" r="1.0" opacity="0.5"/><circle cx="1216" cy="231" r="1.3" opacity="0.65"/><circle cx="1304" cy="230" r="1.0" opacity="0.65"/><circle cx="1327" cy="166" r="1.3" opacity="0.8"/><circle cx="1218" cy="185" r="0.7" opacity="1"/><circle cx="1230" cy="215" r="0.9" opacity="0.8"/><circle cx="1262" cy="259" r="1.0" opacity="0.9"/><circle cx="1355" cy="194" r="0.8" opacity="0.5"/><circle cx="1158" cy="157" r="1.2" opacity="0.8"/><circle cx="1320" cy="228" r="0.8" opacity="0.9"/><circle cx="1260" cy="163" r="1.0" opacity="1"/><circle cx="1273" cy="203" r="0.7" opacity="0.9"/><circle cx="1279" cy="163" r="1.0" opacity="0.9"/><circle cx="1208" cy="235" r="1.3" opacity="0.8"/><circle cx="1146" cy="168" r="1.0" opacity="0.5"/><circle cx="1355" cy="217" r="2.4" opacity="0.9"/><circle cx="1287" cy="245" r="0.8" opacity="1"/><circle cx="1299" cy="175" r="0.7" opacity="0.65"/><circle cx="1174" cy="141" r="0.8" opacity="0.65"/><circle cx="1179" cy="146" r="0.9" opacity="0.8"/><circle cx="1201" cy="205" r="1.5" opacity="0.5"/><circle cx="1325" cy="203" r="0.7" opacity="0.65"/><circle cx="1247" cy="183" r="1.0" opacity="1"/><circle cx="1297" cy="200" r="0.9" opacity="0.65"/><circle cx="1293" cy="248" r="1.5" opacity="1"/><circle cx="1188" cy="183" r="0.9" opacity="1"/><circle cx="1338" cy="201" r="0.8" opacity="1"/><circle cx="1235" cy="181" r="2.0" opacity="0.5"/><circle cx="1273" cy="198" r="2.0" opacity="1"/><circle cx="1296" cy="244" r="1.3" opacity="1"/><circle cx="1353" cy="223" r="1.3" opacity="0.5"/><circle cx="1277" cy="176" r="1.5" opacity="0.65"/><circle cx="1201" cy="209" r="2.4" opacity="0.5"/><circle cx="1297" cy="239" r="2.0" opacity="0.65"/><circle cx="1249" cy="234" r="1.5" opacity="1"/><circle cx="1327" cy="161" r="1.2" opacity="1"/><circle cx="1200" cy="155" r="1.5" opacity="0.5"/><circle cx="1298" cy="191" r="0.9" opacity="1"/><circle cx="1321" cy="242" r="1.0" opacity="1"/><circle cx="1271" cy="181" r="1.1" opacity="1"/><circle cx="1335" cy="217" r="1.0" opacity="1"/><circle cx="1357" cy="179" r="1.2" opacity="0.9"/><circle cx="1186" cy="267" r="2.0" opacity="0.9"/><circle cx="1307" cy="243" r="1.0" opacity="1"/><circle cx="1307" cy="249" r="2.0" opacity="0.8"/><circle cx="1211" cy="253" r="1.5" opacity="1"/><circle cx="1287" cy="227" r="1.5" opacity="0.9"/><circle cx="1356" cy="202" r="2.4" opacity="0.65"/><circle cx="1300" cy="187" r="0.8" opacity="0.8"/><circle cx="1341" cy="262" r="1.1" opacity="0.5"/><circle cx="1271" cy="206" r="1.3" opacity="1"/><circle cx="1246" cy="204" r="2.0" opacity="0.65"/><circle cx="1359" cy="233" r="1.7" opacity="0.5"/><circle cx="1232" cy="216" r="0.9" opacity="0.9"/><circle cx="1370" cy="163" r="1.5" opacity="1"/><circle cx="1319" cy="168" r="2.4" opacity="0.9"/><circle cx="1268" cy="190" r="0.9" opacity="0.65"/><circle cx="1268" cy="170" r="2.0" opacity="0.9"/><circle cx="1345" cy="161" r="1.5" opacity="0.8"/><circle cx="1298" cy="153" r="1.7" opacity="1"/><circle cx="1244" cy="205" r="0.8" opacity="0.5"/><circle cx="1344" cy="215" r="1.1" opacity="0.9"/><circle cx="1225" cy="180" r="1.3" opacity="0.5"/><circle cx="1311" cy="219" r="1.0" opacity="0.9"/><circle cx="1246" cy="203" r="1.5" opacity="0.65"/><circle cx="1279" cy="202" r="1.5" opacity="0.5"/><circle cx="1358" cy="223" r="2.0" opacity="1"/><circle cx="1274" cy="231" r="1.1" opacity="1"/><circle cx="1260" cy="168" r="0.9" opacity="1"/><circle cx="1255" cy="227" r="0.9" opacity="0.5"/><circle cx="1184" cy="209" r="1.5" opacity="1"/><circle cx="1316" cy="183" r="0.8" opacity="0.8"/><circle cx="1346" cy="153" r="1.5" opacity="0.5"/><circle cx="1312" cy="158" r="0.7" opacity="1"/><circle cx="1275" cy="235" r="0.9" opacity="0.8"/><circle cx="1123" cy="146" r="0.7" opacity="0.8"/><circle cx="1295" cy="224" r="0.9" opacity="0.5"/><circle cx="1225" cy="192" r="1.0" opacity="0.9"/><circle cx="1158" cy="163" r="1.1" opacity="1"/><circle cx="1288" cy="143" r="1.7" opacity="0.5"/><circle cx="1315" cy="209" r="1.1" opacity="0.9"/><circle cx="1294" cy="164" r="2.0" opacity="0.9"/><circle cx="1284" cy="222" r="1.7" opacity="1"/><circle cx="1319" cy="184" r="1.5" opacity="0.9"/><circle cx="1239" cy="252" r="1.2" opacity="0.5"/><circle cx="1223" cy="266" r="0.9" opacity="0.5"/><circle cx="1279" cy="176" r="1.1" opacity="0.9"/><circle cx="1332" cy="256" r="1.5" opacity="0.5"/><circle cx="1227" cy="142" r="0.7" opacity="0.65"/><circle cx="1232" cy="202" r="2.4" opacity="0.8"/><circle cx="1315" cy="172" r="1.0" opacity="0.65"/><circle cx="1311" cy="224" r="1.3" opacity="0.65"/><circle cx="1288" cy="240" r="1.3" opacity="0.9"/><circle cx="1217" cy="161" r="1.3" opacity="0.9"/><circle cx="1240" cy="175" r="1.5" opacity="0.9"/><circle cx="1309" cy="219" r="0.8" opacity="0.8"/><circle cx="1241" cy="177" r="1.7" opacity="1"/><circle cx="1292" cy="204" r="1.0" opacity="1"/><circle cx="1359" cy="229" r="1.0" opacity="1"/><circle cx="1295" cy="218" r="1.0" opacity="1"/><circle cx="1307" cy="171" r="1.0" opacity="0.5"/><circle cx="1362" cy="181" r="0.7" opacity="1"/><circle cx="1325" cy="140" r="0.9" opacity="0.65"/><circle cx="1339" cy="209" r="1.2" opacity="0.9"/><circle cx="1292" cy="196" r="1.0" opacity="1"/><circle cx="1273" cy="228" r="2.4" opacity="0.8"/><circle cx="1255" cy="187" r="1.0" opacity="1"/><circle cx="1149" cy="160" r="1.7" opacity="0.5"/><circle cx="1257" cy="195" r="0.7" opacity="1"/><circle cx="1308" cy="171" r="1.0" opacity="0.5"/><circle cx="1328" cy="219" r="1.3" opacity="0.5"/><circle cx="1268" cy="163" r="0.8" opacity="0.8"/><circle cx="1307" cy="184" r="1.0" opacity="0.5"/><circle cx="1347" cy="235" r="0.9" opacity="1"/><circle cx="1280" cy="159" r="0.7" opacity="0.8"/><circle cx="1243" cy="184" r="2.4" opacity="1"/><circle cx="1297" cy="208" r="2.0" opacity="0.65"/><circle cx="1224" cy="229" r="1.3" opacity="0.5"/><circle cx="1293" cy="229" r="1.2" opacity="0.5"/><circle cx="1251" cy="177" r="1.0" opacity="0.8"/><circle cx="1283" cy="183" r="1.2" opacity="1"/><circle cx="1330" cy="147" r="0.7" opacity="1"/><circle cx="1211" cy="231" r="0.8" opacity="1"/><circle cx="1351" cy="215" r="0.8" opacity="1"/><circle cx="1322" cy="203" r="1.3" opacity="0.9"/><circle cx="1262" cy="272" r="2.4" opacity="0.5"/><circle cx="1263" cy="237" r="2.4" opacity="0.8"/><circle cx="1218" cy="251" r="1.3" opacity="0.9"/><circle cx="1282" cy="174" r="1.2" opacity="0.5"/><circle cx="1286" cy="138" r="1.1" opacity="0.5"/><circle cx="1357" cy="216" r="1.5" opacity="0.65"/><circle cx="1237" cy="184" r="1.5" opacity="1"/><circle cx="1264" cy="168" r="1.5" opacity="0.65"/><circle cx="1242" cy="195" r="0.9" opacity="0.5"/><circle cx="1250" cy="176" r="2.4" opacity="0.9"/><circle cx="1314" cy="209" r="1.5" opacity="1"/><circle cx="1209" cy="178" r="2.4" opacity="0.5"/><circle cx="1323" cy="204" r="1.0" opacity="1"/><circle cx="1229" cy="187" r="1.1" opacity="0.5"/><circle cx="1307" cy="238" r="1.0" opacity="0.9"/><circle cx="1281" cy="231" r="2.4" opacity="0.5"/><circle cx="1317" cy="239" r="1.1" opacity="0.65"/><circle cx="1226" cy="196" r="2.0" opacity="0.65"/><circle cx="1296" cy="186" r="2.0" opacity="0.65"/><circle cx="1226" cy="192" r="1.0" opacity="0.5"/><circle cx="1302" cy="154" r="0.9" opacity="1"/><circle cx="1262" cy="216" r="0.8" opacity="0.65"/><circle cx="1295" cy="254" r="1.3" opacity="1"/><circle cx="1311" cy="259" r="1.7" opacity="0.8"/><circle cx="1246" cy="255" r="1.3" opacity="0.5"/><circle cx="1348" cy="140" r="1.1" opacity="0.9"/><circle cx="1264" cy="190" r="1.5" opacity="0.8"/><circle cx="1329" cy="213" r="0.8" opacity="0.8"/><circle cx="1339" cy="181" r="2.4" opacity="0.5"/><circle cx="1349" cy="186" r="2.4" opacity="0.65"/><circle cx="1257" cy="176" r="1.7" opacity="1"/><circle cx="1250" cy="183" r="0.8" opacity="0.8"/><circle cx="1195" cy="193" r="1.5" opacity="0.9"/><circle cx="1319" cy="212" r="0.9" opacity="1"/><circle cx="1337" cy="178" r="2.4" opacity="0.9"/><circle cx="1301" cy="153" r="1.0" opacity="1"/><circle cx="1304" cy="182" r="1.1" opacity="0.9"/><circle cx="1281" cy="153" r="0.7" opacity="1"/><circle cx="1326" cy="209" r="1.0" opacity="0.9"/><circle cx="1174" cy="163" r="2.0" opacity="0.8"/><circle cx="1268" cy="156" r="0.8" opacity="0.5"/><circle cx="1273" cy="155" r="1.0" opacity="1"/><circle cx="1318" cy="176" r="0.7" opacity="1"/><circle cx="1283" cy="204" r="0.9" opacity="0.9"/><circle cx="1293" cy="202" r="1.3" opacity="0.65"/><circle cx="1354" cy="168" r="1.5" opacity="0.65"/><circle cx="1232" cy="186" r="1.7" opacity="1"/><circle cx="1318" cy="235" r="0.9" opacity="0.8"/><circle cx="1356" cy="228" r="1.7" opacity="0.5"/><circle cx="1191" cy="247" r="1.5" opacity="1"/><circle cx="1363" cy="198" r="2.0" opacity="1"/><circle cx="1358" cy="164" r="1.2" opacity="0.65"/><circle cx="1244" cy="158" r="1.2" opacity="0.9"/><circle cx="1329" cy="160" r="1.0" opacity="0.9"/><circle cx="1279" cy="205" r="1.0" opacity="0.9"/><circle cx="1251" cy="168" r="1.0" opacity="1"/><circle cx="1300" cy="169" r="2.0" opacity="0.8"/><circle cx="1209" cy="204" r="2.0" opacity="0.65"/><circle cx="1291" cy="159" r="2.4" opacity="0.5"/><circle cx="1164" cy="166" r="0.8" opacity="0.8"/><circle cx="1239" cy="172" r="1.3" opacity="0.65"/><circle cx="1142" cy="169" r="1.1" opacity="1"/><circle cx="1369" cy="167" r="1.2" opacity="0.9"/><circle cx="1280" cy="211" r="1.2" opacity="0.5"/><circle cx="1287" cy="218" r="1.3" opacity="0.8"/><circle cx="1218" cy="229" r="1.3" opacity="1"/><circle cx="1224" cy="139" r="1.3" opacity="1"/><circle cx="1338" cy="197" r="1.0" opacity="0.65"/><circle cx="1278" cy="228" r="0.7" opacity="0.9"/><circle cx="1226" cy="183" r="1.1" opacity="0.5"/><circle cx="1316" cy="180" r="0.9" opacity="0.5"/><circle cx="1294" cy="222" r="2.4" opacity="0.9"/><circle cx="1343" cy="154" r="1.3" opacity="0.9"/><circle cx="1211" cy="198" r="1.0" opacity="0.8"/><circle cx="1236" cy="236" r="1.5" opacity="1"/><circle cx="1185" cy="153" r="1.3" opacity="0.8"/><circle cx="1338" cy="166" r="1.7" opacity="0.8"/><circle cx="1206" cy="221" r="0.9" opacity="0.8"/><circle cx="1344" cy="171" r="1.2" opacity="0.5"/><circle cx="1190" cy="236" r="1.2" opacity="0.8"/><circle cx="1152" cy="168" r="0.8" opacity="1"/><circle cx="1324" cy="195" r="1.0" opacity="0.8"/><circle cx="1267" cy="256" r="0.8" opacity="1"/><circle cx="1291" cy="219" r="1.0" opacity="1"/><circle cx="1241" cy="164" r="1.0" opacity="0.9"/><circle cx="1264" cy="179" r="2.0" opacity="1"/><circle cx="1242" cy="237" r="1.2" opacity="1"/><circle cx="1322" cy="222" r="1.5" opacity="1"/><circle cx="1319" cy="163" r="1.5" opacity="1"/><circle cx="1214" cy="232" r="2.0" opacity="1"/><circle cx="1282" cy="193" r="1.2" opacity="0.65"/><circle cx="1315" cy="203" r="1.1" opacity="0.65"/><circle cx="1330" cy="230" r="0.9" opacity="1"/><circle cx="1249" cy="204" r="1.5" opacity="0.65"/><circle cx="1357" cy="168" r="1.3" opacity="1"/><circle cx="1243" cy="172" r="0.7" opacity="0.8"/><circle cx="1310" cy="219" r="1.7" opacity="1"/><circle cx="1238" cy="158" r="1.5" opacity="0.9"/><circle cx="1295" cy="217" r="2.0" opacity="0.8"/><circle cx="1259" cy="183" r="1.1" opacity="1"/><circle cx="1232" cy="242" r="0.8" opacity="1"/><circle cx="1272" cy="249" r="2.0" opacity="1"/><circle cx="1342" cy="155" r="1.3" opacity="1"/><circle cx="1264" cy="171" r="1.3" opacity="0.9"/><circle cx="1215" cy="226" r="1.1" opacity="0.5"/><circle cx="1199" cy="140" r="0.7" opacity="0.9"/><circle cx="1334" cy="205" r="1.1" opacity="0.5"/><circle cx="1264" cy="218" r="1.2" opacity="1"/><circle cx="1252" cy="189" r="1.2" opacity="1"/><circle cx="1267" cy="154" r="1.0" opacity="0.5"/><circle cx="1269" cy="196" r="2.0" opacity="0.5"/><circle cx="1261" cy="190" r="1.7" opacity="1"/><circle cx="1325" cy="193" r="2.0" opacity="0.5"/><circle cx="1262" cy="158" r="1.0" opacity="1"/><circle cx="1345" cy="144" r="2.0" opacity="0.5"/><circle cx="1310" cy="171" r="0.9" opacity="0.8"/><circle cx="1294" cy="210" r="1.1" opacity="1"/><circle cx="1358" cy="172" r="1.2" opacity="0.8"/><circle cx="1360" cy="178" r="1.5" opacity="0.8"/><circle cx="1318" cy="145" r="0.7" opacity="0.9"/><circle cx="1328" cy="231" r="1.1" opacity="0.8"/><circle cx="1332" cy="201" r="1.3" opacity="0.5"/><circle cx="1312" cy="225" r="1.1" opacity="0.65"/><circle cx="1350" cy="181" r="2.0" opacity="0.65"/><circle cx="1331" cy="216" r="1.0" opacity="1"/><circle cx="1252" cy="157" r="0.9" opacity="0.65"/><circle cx="1227" cy="151" r="0.9" opacity="0.65"/><circle cx="1347" cy="193" r="1.3" opacity="1"/><circle cx="1264" cy="198" r="1.3" opacity="1"/><circle cx="1191" cy="223" r="0.8" opacity="0.9"/><circle cx="1240" cy="192" r="2.4" opacity="1"/><circle cx="1237" cy="190" r="1.1" opacity="0.9"/><circle cx="1278" cy="214" r="0.8" opacity="0.9"/><circle cx="1283" cy="180" r="1.0" opacity="0.8"/><circle cx="1324" cy="189" r="1.0" opacity="0.9"/><circle cx="1306" cy="202" r="1.0" opacity="1"/><circle cx="1319" cy="238" r="1.0" opacity="0.8"/><circle cx="1209" cy="195" r="2.0" opacity="0.9"/><circle cx="1276" cy="188" r="0.8" opacity="0.8"/><circle cx="1246" cy="218" r="1.2" opacity="1"/><circle cx="1203" cy="195" r="2.0" opacity="1"/><circle cx="1283" cy="249" r="1.0" opacity="0.5"/><circle cx="1342" cy="170" r="1.3" opacity="1"/><circle cx="1157" cy="166" r="0.9" opacity="1"/><circle cx="1324" cy="179" r="1.5" opacity="0.8"/></g>
<!-- white splash near window edge -->
<ellipse cx="1140" cy="166" rx="36" ry="11" fill="#fff" opacity=".9" filter="url(#b3)" transform="rotate(-14 1140 166)"/>
<!-- fin -->
<g>
<path d="M1111 193 L1138 198" stroke="#3a5a60" stroke-width="1.4" opacity=".8"/>
<path id="finp" d="M1192 176 Q1170 183 1147 179.5 L1128 214 L1108 240 L1108 262 Q1140 260 1162 240 Q1182 215 1192 176Z" fill="url(#gFin)"/>
<path d="M1168 190 Q1156 222 1122 248" fill="none" stroke="#9c9d93" stroke-width="16" opacity=".55" filter="url(#b3)" clip-path="url(#finc)"/>
<path d="M1147 179.5 L1128 214 L1108 240 L1108 262 Q1140 260 1162 240 Q1182 215 1192 176" fill="none" stroke="#3c5a60" stroke-width="2" opacity=".55" filter="url(#b1)"/>
<rect x="1105" y="170" width="92" height="96" filter="url(#fGrain)" clip-path="url(#finc)" opacity=".35"/>
</g>
</svg>
<div id="win">
  <div class="abs" style="left:-1px;top:0;width:1px;height:668px;background:#024e70"></div>
  <div id="title">Any Sound Recorder</div>
  <div id="side">
    <div class="nav" style="top:80px"><span style="letter-spacing:-.18px">Start Recording</span></div>
    <div class="nav sel" style="top:124px"><span>Audio History</span></div>
    <div class="nav" style="top:168px"><span style="letter-spacing:.28px">About &amp; Help</span></div>
  </div>
  <div id="h1">History</div>
  <div id="hr"></div>
  <div id="row"><div class="n">Recording.m4a</div><div class="d">11/25/2019 3:17:30 PM</div><div class="t">01:02</div></div>
  <div class="tm" style="left:182px">00:28</div>
  <div class="tm" style="left:814px">01:02</div>
  <div id="trk1"></div><div id="trk2"></div><div id="thumb"></div>
  <div id="cmd"></div>
  <div class="abs" style="left:604px;top:628px;width:3px;height:40px;background:#f4f4f4"></div>
  <div class="abs" style="left:673px;top:628px;width:2px;height:40px;background:#f4f4f4"></div>
  <div class="abs" style="left:675px;top:628px;width:1px;height:40px;background:#cfcfcf"></div>
  <div class="abs" style="left:675px;top:628px;width:66px;height:1px;background:linear-gradient(90deg,#cfcfcf,#e4e4e4 60%,#ededed)"></div>
  <div id="selbtn"></div>
</div>
<svg id="ic" width="1366" height="768" viewBox="0 0 1366 768" style="left:0;top:0" fill="none" stroke-linecap="butt">
<!-- hamburger -->
<g fill="#fff"><rect x="263" y="124" width="20" height="1"/><rect x="263" y="129" width="20" height="1"/><rect x="263" y="134" width="20" height="1"/></g>
<!-- mic -->
<g stroke="#fff" stroke-width="1.5">
<rect x="270.7" y="165.8" width="7.8" height="13.6" rx="2" ry="2"/>
<path d="M267.7 174.8v2.3a6.85 5.2 0 0 0 13.7 0v-2.3"/>
<path d="M274.55 182.4V184.4M271.2 184.5H278" stroke-width="1.3"/>
</g>
<!-- history -->
<g stroke="#000" stroke-width="1.35">
<path d="M266.7 215.2A9.4 9.4 0 1 1 266.1 221.3"/>
<path d="M265.6 210.8V215.9H270.4"/>
<path d="M274.5 214.2V219.6L278 223.2"/>
</g>
<!-- help -->
<g stroke="#fff" stroke-width="1.45">
<circle cx="274.5" cy="262.5" r="9"/>
<path d="M271.4 260.4a3.1 3.1 0 1 1 4.8 2.6c-1.2.8-1.7 1.5-1.7 2.7v.4"/>
</g>
<circle cx="274.5" cy="267.7" r=".85" fill="#fff"/>
<!-- window buttons -->
<rect x="991" y="58" width="10" height="1" fill="#000"/>
<rect x="1037.5" y="53.5" width="9" height="9" stroke="#000" stroke-width="1"/>
<path d="M1083.2 53.2L1092.8 62.8M1092.8 53.2L1083.2 62.8" stroke="#000" stroke-width="1.1"/>
<!-- folder -->
<g stroke="#000" stroke-width="1.4" stroke-linejoin="round">
<path d="M1061.7 119V104.7H1067L1068.7 105.9H1077Q1078.2 105.9 1078.2 107.1V110"/>
<path d="M1066.6 110.2H1082.4L1078 119.4H1061.7Z"/>
</g>
<!-- pause -->
<rect x="754" y="684" width="1" height="12" fill="#000"/><rect x="759" y="684" width="1" height="12" fill="#000"/>
<!-- share -->
<path d="M817.5 686.2V695.5H828.5V693.4" stroke="#000" stroke-width="1.1"/>
<path d="M827.5 682.5L832.2 687.3L827.5 692.1V689.6Q822.6 689.4 820.4 692.7Q820.8 686 827.5 685.2Z" stroke="#000" stroke-width="1" stroke-linejoin="round"/>
<!-- trim -->
<g fill="#000">
<rect x="885" y="688" width="1" height="5"/><rect x="887" y="688" width="1" height="5"/><rect x="899" y="688" width="1" height="5"/><rect x="901" y="688" width="1" height="5"/>
<rect x="889" y="684" width="1" height="1"/><rect x="889" y="686" width="1" height="1"/><rect x="889" y="694" width="1" height="1"/><rect x="889" y="696" width="1" height="1"/>
<rect x="896" y="684" width="1" height="1"/><rect x="896" y="686" width="1" height="1"/><rect x="896" y="694" width="1" height="1"/><rect x="896" y="696" width="1" height="1"/>
</g>
<rect x="889.5" y="688.5" width="8" height="4" stroke="#000" stroke-width="1"/>
<!-- trash -->
<g stroke="#000" stroke-width="1.1">
<path d="M954 684.5H967"/>
<path d="M958.5 684.5V682.6H962.5V684.5"/>
<path d="M955.6 684.5V696.4Q955.6 697.5 956.7 697.5H964.3Q965.4 697.5 965.4 696.4V684.5"/>
<path d="M958.5 687V694.7M960.5 687V694.7M962.5 687V694.7" stroke-width="1"/>
</g>
<!-- rename -->
<g stroke="#000" stroke-width="1.1">
<path d="M1030.6 687.5H1021.5V692.5H1030.6"/>
<path d="M1034.3 687.5H1036.5V692.5H1034.3"/>
<path d="M1030 684.5Q1032.4 684.5 1032.5 686V694Q1032.4 695.5 1030 695.5M1035 684.5Q1032.6 684.5 1032.5 686M1035 695.5Q1032.6 695.5 1032.5 694" stroke-width="1.15"/>
</g>
<rect x="1023" y="689" width="6" height="2" fill="#000"/>
<!-- more -->
<g fill="#000"><rect x="1078.5" y="690" width="2" height="2" rx=".5"/><rect x="1086" y="690" width="2" height="2" rx=".5"/><rect x="1093.5" y="690" width="2" height="2" rx=".5"/></g>
</svg>
</body>
</html>
